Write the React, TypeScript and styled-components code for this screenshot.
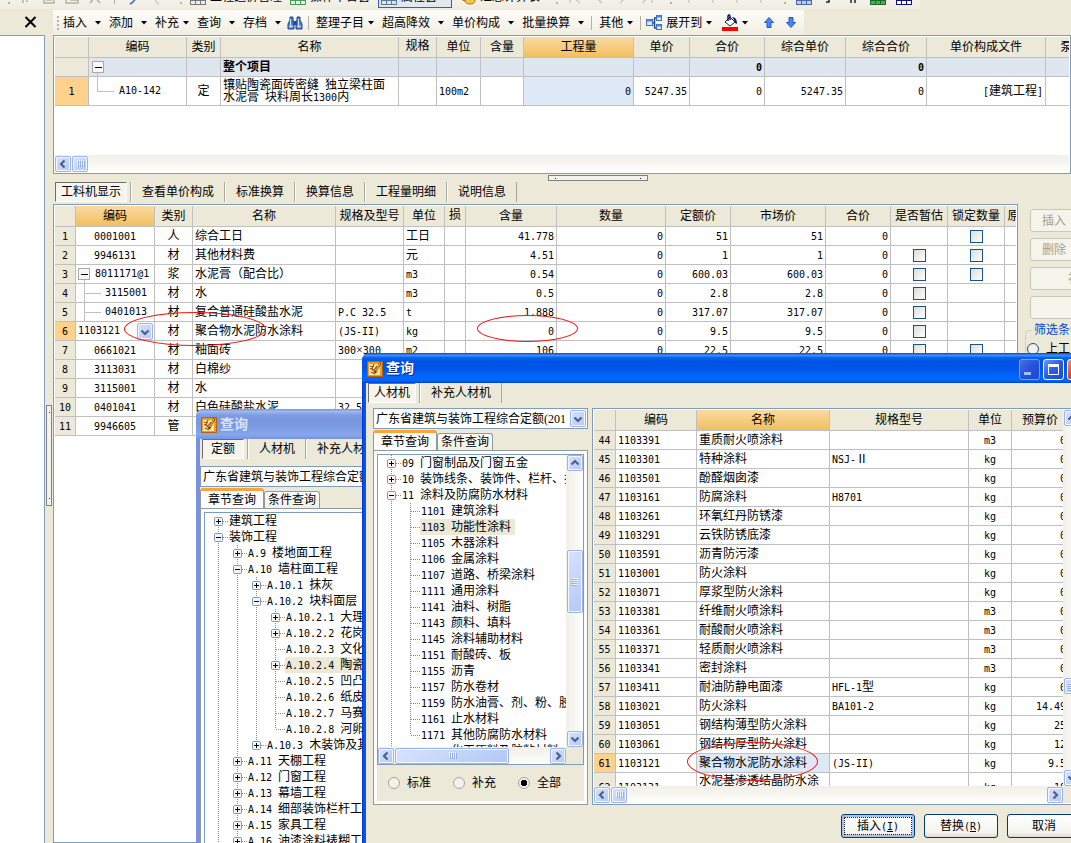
import React from 'react';
import styled, { createGlobalStyle, css } from 'styled-components';

const GlobalStyle = createGlobalStyle`
  *, *::before, *::after { box-sizing: border-box; }
  html, body { margin: 0; padding: 0; }
  body, button, input, select, table {
    font-family: "Liberation Serif", "Noto Sans CJK SC", sans-serif;
    font-size: 12px;
    line-height: 14px;
    color: #000;
  }
  svg { flex: none; }
`;

const face = '#ece9d8';
const edge = '#7f9db9';
const rule = '#c0c0c0';

/* ---------- text ---------- */

const Latin = styled.span`
  font-family: "DejaVu Sans Mono", monospace;
  font-size: 10px;
  line-height: 1;
  white-space: pre;
`;

/* Half-width characters are set in a monospaced face, half as wide as a Chinese character. */
function Mix({ text }: { text: string }) {
  return (
    <>
      {text.split(/([\x20-\x7e]+)/).map((part, i) =>
        i % 2 ? <Latin key={i}>{part}</Latin> : part
      )}
    </>
  );
}

/* ---------- page frame ---------- */

const Page = styled.div`
  position: relative;
  display: flex;
  flex-direction: column;
  height: 100vh;
  overflow: hidden;
  background: ${face};
`;

const TopStrip = styled.div`
  display: flex;
  align-items: flex-end;
  height: 9px;
  overflow: hidden;
`;

const TopGroup = styled.div<{ $gap: number }>`
  display: flex;
  align-items: center;
  gap: ${p => p.$gap}px;
  height: 24px;
  padding: 0 8px;
  white-space: nowrap;
  background: linear-gradient(#fdfcfa, #efece0);
`;

const TopToggle = styled.button`
  display: flex;
  align-items: center;
  gap: 4px;
  height: 22px;
  padding: 0 14px 0 2px;
  border: 1px solid #2a62c9;
  background: #e2e8f2;
`;

const TopLabel = styled.button`
  display: flex;
  align-items: center;
  gap: 4px;
  border: 0;
  padding: 0;
  background: none;
`;

const Body = styled.div`
  display: grid;
  grid-template-columns: 45px 8px minmax(0, 1fr);
  flex: 1;
  min-height: 0;
`;

const LeftDock = styled.aside`
  display: flex;
  flex-direction: column;
`;

const DockHead = styled.div`
  display: flex;
  justify-content: flex-end;
  align-items: center;
  height: 26px;
  padding-right: 8px;
`;

const CloseButton = styled.button`
  display: flex;
  padding: 0;
  border: 0;
  background: none;
`;

const DockPane = styled.div`
  flex: 1;
  background: #fff;
  border-top: 1px solid ${edge};
  border-right: 1px solid ${edge};
`;

const Splitter = styled.div<{ $horizontal?: boolean }>`
  display: flex;
  align-items: ${p => (p.$horizontal ? 'center' : 'flex-start')};
  justify-content: center;
  height: ${p => (p.$horizontal ? '8px' : 'auto')};
  padding-top: ${p => (p.$horizontal ? '0' : '396px')};
  padding-left: ${p => (p.$horizontal ? '72px' : '0')};
`;

const SplitGrip = styled.div<{ $horizontal?: boolean }>`
  display: flex;
  justify-content: space-between;
  align-items: center;
  flex-direction: ${p => (p.$horizontal ? 'row' : 'column')};
  width: ${p => (p.$horizontal ? '100px' : '6px')};
  height: ${p => (p.$horizontal ? '6px' : '101px')};
  padding: ${p => (p.$horizontal ? '0 6px' : '6px 0')};
  border: 1px solid #808080;
  background: #f4f2ea;
  &::before, &::after { content: ''; width: 1px; height: 1px; background: #1c1c7c; }
`;

const MainArea = styled.main`
  display: flex;
  flex-direction: column;
  min-width: 0;
  min-height: 0;
`;

/* ---------- toolbar ---------- */

const Toolbar = styled.div`
  display: flex;
  align-items: center;
  align-self: flex-start;
  height: 25px;
  margin-top: 1px;
  padding: 0 4px;
  border-radius: 2px;
  background: linear-gradient(#fefdfb, #f0ede1);
`;

const Handle = styled.span`
  width: 2px;
  height: 14px;
  flex: none;
  background: repeating-linear-gradient(#b8b4a2 0 2px, transparent 2px 4px);
`;

const ToolButton = styled.button<{ $tight?: boolean; $icon?: boolean }>`
  display: flex;
  align-items: center;
  gap: ${p => (p.$tight ? 4 : 8)}px;
  height: 22px;
  padding: 0 ${p => (p.$icon ? 2 : 4)}px;
  border: 0;
  background: none;
  white-space: nowrap;
`;

const ToolSep = styled.span`
  width: 1px;
  height: 14px;
  margin: 0 3px;
  background: #b5b2a2;
`;

const ToolGap = styled.span`
  width: 4px;
`;

function Caret() {
  return (
    <svg width="6" height="4" viewBox="0 0 6 4">
      <path d="M0 0h6L3 3.6z" fill="#000" />
    </svg>
  );
}

/* ---------- grids ---------- */

const Panel = styled.section<{ $grow?: boolean }>`
  display: flex;
  flex-direction: column;
  flex: ${p => (p.$grow ? '1' : 'none')};
  min-width: 0;
  min-height: 0;
  padding: 1px;
  border: 1px solid ${edge};
  background: #fff;
`;

const GridView = styled.div<{ $height?: number }>`
  ${p => (p.$height ? css`height: ${p.$height}px;` : css`flex: 1;`)}
  min-width: 0;
  overflow: hidden;
  background: #fff;
`;

const Grid = styled.table`
  table-layout: fixed;
  border-collapse: separate;
  border-spacing: 0;
`;

const Th = styled.th<{ $hot?: boolean; $top?: boolean }>`
  height: 21px;
  padding: ${p => (p.$top ? '2px 0 0' : '0')};
  font-weight: normal;
  text-align: center;
  vertical-align: ${p => (p.$top ? 'top' : 'middle')};
  white-space: nowrap;
  overflow: hidden;
  border-right: 1px solid ${rule};
  border-bottom: 1px solid ${rule};
  background: ${p => (p.$hot ? 'linear-gradient(#fbdaa2, #f1bf60)' : face)};
`;

type Align = 'left' | 'right' | 'center';

const Td = styled.td<{ $align?: Align; $bg?: string; $bold?: boolean; $h?: number; $wrap?: boolean }>`
  height: ${p => p.$h ?? 19}px;
  padding: 0 2px;
  text-align: ${p => p.$align ?? 'left'};
  font-weight: ${p => (p.$bold ? 'bold' : 'normal')};
  white-space: ${p => (p.$wrap ? 'normal' : 'nowrap')};
  line-height: ${p => (p.$wrap ? 12 : 14)}px;
  overflow: hidden;
  border-right: 1px solid ${rule};
  border-bottom: 1px solid ${rule};
  background: ${p => p.$bg ?? 'transparent'};
`;

const RowHead = styled.th<{ $on?: boolean }>`
  padding: 0;
  font-weight: normal;
  text-align: center;
  border-right: 1px solid ${rule};
  border-bottom: 1px solid ${rule};
  background: ${p => (p.$on ? '#ffd18a' : face)};
`;

const CodeBox = styled.div`
  display: flex;
  align-items: center;
`;

const Tick = styled.input`
  appearance: none;
  display: block;
  width: 13px;
  height: 13px;
  margin: 0 auto;
  border: 1px solid #1c5180;
  background: linear-gradient(135deg, #dcdcd7, #fff);
`;

/* ---------- scroll bars ---------- */

const HTrack = styled.div<{ $grow?: boolean }>`
  display: flex;
  align-items: center;
  justify-content: space-between;
  flex: ${p => (p.$grow ? '1' : 'none')};
  height: 17px;
  background: linear-gradient(#f0efe8, #fefefc);
`;

const VTrack = styled.div`
  display: flex;
  flex-direction: column;
  align-items: center;
  justify-content: space-between;
  flex: none;
  width: 17px;
  background: linear-gradient(90deg, #f0efe8, #fefefc);
`;

const ScrollSpacer = styled.span<{ $share: number }>`
  flex: ${p => p.$share};
`;

const ScrollEnd = styled.div`
  display: flex;
  flex: 1;
  gap: 1px;
`;

const scrollFace = css`
  display: flex;
  align-items: center;
  justify-content: center;
  flex: none;
  padding: 0;
  border: 1px solid #9db4e6;
  border-radius: 2px;
  box-shadow: inset 0 0 0 1px #f3f7ff;
  background: linear-gradient(135deg, #d6e2fe, #b4c8f6);
`;

const Arrow = styled.button`
  ${scrollFace}
  width: 16px;
  height: 16px;
`;

const Thumb = styled.div<{ $w?: number; $h?: number }>`
  ${scrollFace}
  width: ${p => p.$w ?? 16}px;
  height: ${p => p.$h ?? 16}px;
`;

type Dir = 'left' | 'right' | 'up' | 'down';
const chevrons: Record<Dir, string> = {
  left: 'M6.5 1.5L3 5l3.5 3.5',
  right: 'M3.5 1.5L7 5L3.5 8.5',
  up: 'M1.5 6.5L5 3l3.5 3.5',
  down: 'M1.5 3.5L5 7l3.5-3.5',
};

function Chevron({ dir }: { dir: Dir }) {
  return (
    <svg width="10" height="10" viewBox="0 0 10 10">
      <path d={chevrons[dir]} fill="none" stroke="#4d6185" strokeWidth="2.2" />
    </svg>
  );
}

function Ribs({ vertical }: { vertical?: boolean }) {
  return (
    <svg width="9" height="9" viewBox="0 0 9 9">
      <g transform={vertical ? 'rotate(90 4.5 4.5)' : undefined}>
        <path d="M1.5 1v6M3.5 1v6M5.5 1v6M7.5 1v6" stroke="#f0f5ff" />
        <path d="M2.5 2v6M4.5 2v6M6.5 2v6M8.5 2v6" stroke="#93ade8" />
      </g>
    </svg>
  );
}

/* ---------- flat tabs ---------- */

const Tabs = styled.div`
  display: flex;
  flex: none;
  height: 20px;
  padding-left: 1px;
`;

const TabSlot = styled.div<{ $on?: boolean }>`
  display: flex;
  padding: ${p => (p.$on ? '0 3px 0 0' : '0')};
  border-left: 1px solid #fff;
  border-right: 1px solid #aca899;
  &:first-child { border-left-color: ${face}; }
`;

const Tab = styled.button<{ $on?: boolean }>`
  min-width: 42px;
  padding: 0 ${p => (p.$on ? 5 : 10)}px;
  white-space: nowrap;
  border: 0 solid transparent;
  background: none;
  ${p => p.$on && css`
    border-width: 1px;
    border-color: #716f64 #fff #fff #716f64;
    background: #f6f4ec;
  `}
`;

function TabStrip({ items }: { items: string[] }) {
  return (
    <Tabs role="tablist">
      {items.map((t, i) => (
        <TabSlot key={t} $on={i === 0}>
          <Tab role="tab" aria-selected={i === 0} $on={i === 0}>{t}</Tab>
        </TabSlot>
      ))}
    </Tabs>
  );
}

/* ---------- lower half ---------- */

const LowerRow = styled.div`
  display: flex;
  flex: 1;
  min-height: 0;
  margin-top: 2px;
`;

const SideTools = styled.div`
  display: flex;
  flex-direction: column;
  flex: none;
  gap: 6px;
  width: 53px;
  padding: 5px 0 0 12px;
`;

const GreyButton = styled.button<{ $wide?: boolean }>`
  width: ${p => (p.$wide ? 100 : 48)}px;
  height: 23px;
  flex: none;
  padding: 0;
  border: 1px solid #c9c7ba;
  border-radius: 3px;
  background: #f5f4ea;
  color: #a1a192;
`;

const FilterBox = styled.fieldset`
  width: 120px;
  height: 100px;
  margin: -2px 0 0 -5px;
  padding: 5px 0 0 1px;
  border: 1px solid #d0d0bf;
  border-radius: 4px;
  white-space: nowrap;
`;

const FilterLegend = styled.legend`
  margin-left: 5px;
  padding: 0 2px;
  color: #0046d5;
`;

const RadioLabel = styled.label`
  display: flex;
  align-items: center;
  gap: 7px;
`;

const Radio = styled.input<{ $muted?: boolean }>`
  appearance: none;
  width: 12px;
  height: 12px;
  margin: 0;
  border: 1px solid ${p => (p.$muted ? '#a8a598' : '#1c5180')};
  border-radius: 50%;
  background: #f4f2e8;
  &:checked { background: radial-gradient(circle, #000 0 3px, #f4f2e8 3px); }
`;

const Ring = styled.div<{ $x: number; $y: number; $w: number; $h: number }>`
  position: absolute;
  left: ${p => p.$x}px;
  top: ${p => p.$y}px;
  width: ${p => p.$w}px;
  height: ${p => p.$h}px;
  border: 1px solid #f01818;
  border-radius: 50%;
  pointer-events: none;
`;

/* ---------- windows ---------- */

const Win = styled.section<{ $active?: boolean }>`
  position: absolute;
  left: ${p => (p.$active ? 362 : 196)}px;
  top: ${p => (p.$active ? 353 : 409)}px;
  ${p => (p.$active ? css`right: -22px;` : css`width: 480px;`)}
  padding: 0 4px 4px;
  border-radius: 7px 7px 0 0;
  background: ${p => (p.$active ? 'linear-gradient(90deg, #0031d8, #0855e8 2px, #0855e8)' : '#7a90e0')};
`;

const TitleBar = styled.header<{ $active?: boolean }>`
  display: flex;
  align-items: center;
  gap: 3px;
  height: 30px;
  margin: 0 -4px;
  padding: 2px 5px 0;
  border-radius: 7px 7px 0 0;
  background: ${p =>
    p.$active
      ? 'linear-gradient(#0a48c8, #3a92ff 8%, #0560ec 16%, #0053e4 30%, #0057ea 55%, #0068ff 82%, #0064fa 92%, #0042cc)'
      : 'linear-gradient(#7691e0, #a0b8ee 8%, #809ce4 20%, #7a96df 35%, #7d9ae2 60%, #84a8ea 85%, #7a94de)'};
`;

const TitleText = styled.h1<{ $active?: boolean }>`
  flex: 1;
  margin: 0;
  font-size: 14px;
  line-height: 18px;
  font-weight: bold;
  color: ${p => (p.$active ? '#fff' : '#d8e4f8')};
  text-shadow: ${p => (p.$active ? '1px 1px #0a2c8c' : 'none')};
`;

const CaptionButton = styled.button<{ $kind: 'min' | 'max' | 'close' }>`
  display: flex;
  align-items: center;
  justify-content: center;
  width: 21px;
  height: 21px;
  padding: 0;
  border: 1px solid ${p => (p.$kind === 'min' ? '#7e9ef0' : '#fff')};
  border-radius: 3px;
  background: ${p =>
    p.$kind === 'close'
      ? 'linear-gradient(135deg, #f0957c, #d8401c 50%, #b83010)'
      : p.$kind === 'max'
        ? 'linear-gradient(135deg, #6a96f6, #2a5ce4 50%, #1c4ad8)'
        : 'linear-gradient(135deg, #4a70e0, #2352dc 50%, #1a48d4)'};
`;

const WinBody = styled.div`
  background: ${face};
`;

const Combo = styled.div`
  position: relative;
  height: 21px;
  border: 1px solid ${edge};
  background: #fff;
`;

const ComboSelect = styled.select`
  appearance: none;
  display: block;
  width: 100%;
  height: 19px;
  padding: 0 22px 0 2px;
  border: 0;
  background: none;
`;

const ComboArrow = styled.span`
  ${scrollFace}
  position: absolute;
  top: 1px;
  right: 1px;
  width: 16px;
  height: 17px;
  pointer-events: none;
`;

const FormTabs = styled.div`
  display: flex;
  align-items: flex-end;
  height: 20px;
  margin-top: 1px;
`;

const FormTab = styled.button<{ $on?: boolean }>`
  height: ${p => (p.$on ? 20 : 17)}px;
  width: ${p => (p.$on ? 64 : 56)}px;
  padding: 0;
  border: 1px solid #919b9c;
  border-bottom: 0;
  border-radius: 3px 3px 0 0;
  background: linear-gradient(#fff, #f0f0ea);
  ${p => p.$on && css`
    border-top: 3px solid #f9a53a;
    background: #fcfcfe;
  `}
`;

const TabPane = styled.div`
  padding: 3px;
  border: 1px solid #919b9c;
  background: ${face};
  box-shadow: inset 0 0 0 3px #fcfcfe;
`;

const TreeBox = styled.div`
  border: 1px solid ${edge};
  background: #fff;
`;

const TreeRow = styled.div`
  display: flex;
  height: 16px;
  white-space: nowrap;
`;

const TreeView = styled.div<{ $height: number }>`
  flex: 1;
  min-width: 0;
  height: ${p => p.$height}px;
  padding-left: 4px;
  overflow: hidden;
`;

const TreeSplit = styled.div`
  display: flex;
`;

const TreeLabel = styled.button<{ $on?: boolean }>`
  height: 16px;
  padding: 0 4px 0 1px;
  border: 0;
  white-space: nowrap;
  background: ${p => (p.$on ? face : 'none')};
`;

/* | line, t tee, L corner, + and - boxes, p last closed box, s first closed box, space nothing */
function Guide({ kind }: { kind: string }) {
  const up = '|tL+-p'.includes(kind);
  const down = '|t+-s'.includes(kind);
  const branch = 'tL+-ps'.includes(kind);
  const box = '+-ps'.includes(kind);
  return (
    <svg width="19" height="16" viewBox="0 0 19 16">
      <g stroke="#8a8a8a" strokeDasharray="1 1">
        {up && <path d="M9.5 0v8" />}
        {down && <path d="M9.5 8v8" />}
        {branch && <path d="M10 8.5h9" />}
      </g>
      {box && (
        <>
          <rect x="5.5" y="4.5" width="8" height="8" rx="1" fill="#f6f4ee" stroke="#7898b5" />
          <path d={kind === '-' ? 'M7 8.5h5' : 'M7 8.5h5M9.5 6v5'} stroke="#000" />
        </>
      )}
    </svg>
  );
}

type Node = [string, string, boolean?];

function Tree({ nodes, height }: { nodes: Node[]; height: number }) {
  return (
    <TreeView $height={height} role="tree">
      {nodes.map(([guides, label, on]) => (
        <TreeRow key={label} role="treeitem" aria-selected={!!on}>
          {guides.split('').map((g, i) => <Guide key={i} kind={g} />)}
          <TreeLabel $on={on}><Mix text={label} /></TreeLabel>
        </TreeRow>
      ))}
    </TreeView>
  );
}

const QuotaBody = styled.div`
  padding: 7px 4px 0 0;
`;

const QueryBody = styled.div`
  display: grid;
  grid-template-columns: 215px minmax(0, 1fr);
  gap: 4px;
  padding: 5px 8px 0 7px;
`;

const RadioRow = styled.div`
  display: flex;
  gap: 22px;
  align-items: center;
  height: 36px;
  padding-left: 11px;
`;

const Corner = styled.div`
  width: 17px;
  height: 17px;
  flex: none;
  background: ${face};
`;

const ResultRow = styled.div`
  display: flex;
  min-width: 0;
`;

const ResultPane = styled.div`
  border: 1px solid ${edge};
  padding: 1px 0 1px 1px;
  background: #fff;
`;

const Footer = styled.footer`
  display: flex;
  justify-content: flex-end;
  gap: 9px;
  padding: 9px 8px 14px;
`;

const XpButton = styled.button<{ $default?: boolean }>`
  width: 74px;
  height: 24px;
  padding: 0;
  border: 1px solid #003c74;
  border-radius: 3px;
  background: linear-gradient(#fff, #f3f3ef 80%, #dcd8cf);
  ${p => p.$default && css`
    box-shadow: inset 0 0 0 2px #a9c3f0;
    outline: 1px dotted #222;
    outline-offset: -4px;
  `}
`;

/* ---------- icons ---------- */

const Binoculars = () => (
  <svg width="16" height="16" viewBox="0 0 16 16">
    <path d="M3 2h3v3l1 2v7H1V9l2-4z" fill="#4a7cc8" stroke="#24488e" />
    <path d="M10 2h3v3l2 4v5H9V7l1-2z" fill="#4a7cc8" stroke="#24488e" />
    <path d="M6.500 6h3v4h-3z" fill="#24488e" />
    <path d="M3.500 4v7M11.500 4v7" stroke="#cfe2fa" />
    <path d="M2 11.500h4M10 11.500h4" stroke="#b4d0f4" strokeWidth="2" />
  </svg>
);

const ExpandIcon = () => (
  <svg width="16" height="16" viewBox="0 0 16 16">
    <path d="M6 8h3M8.500 3v10M8 3h3M8 13h3" fill="none" stroke="#234a8c" strokeWidth="1.500" />
    <g fill="#d9e8fc" stroke="#3a70c8">
      <rect x=".5" y="4.500" width="6" height="6" />
      <rect x="10.500" y=".5" width="5" height="5" />
      <rect x="10.500" y="9.500" width="5" height="5" />
    </g>
    <path d="M1 5.500h5M11 1.500h4M11 10.500h4" stroke="#4a86e0" strokeWidth="2" />
  </svg>
);

const BucketIcon = () => (
  <svg width="16" height="17" viewBox="0 0 16 17">
    <path d="M3 8l5-5 5 5-5 4z" fill="#fff" stroke="#222" />
    <path d="M6 7V2q1-2 2 0v4" fill="none" stroke="#10107c" strokeWidth="1.500" />
    <path d="M10 3q5 0 5 7l-2-1q0-3-3-6z" fill="#10107c" />
    <path d="M0 13h16v4H0z" fill="#f00" />
  </svg>
);

const BlueArrow = ({ down }: { down?: boolean }) => (
  <svg width="10" height="11" viewBox="0 0 10 11">
    <path
      d="M5 .5L9.500 5.500H7v5H3v-5H.5z"
      transform={down ? 'rotate(180 5 5.500)' : undefined}
      fill="#4a86f0"
      stroke="#2458c0"
    />
  </svg>
);

const AppIcon = () => (
  <svg width="16" height="16" viewBox="0 0 16 16">
    <rect x=".5" y=".5" width="15" height="15" fill="#f29a1a" stroke="#b8600c" />
    <path d="M2 3h9l2 2v9H2z" fill="#ffe9a8" />
    <path d="M3 5l3 1M3 8l3-1M7 3l-2 5 3 3M10 5L7 9M4 11l4 2" fill="none" stroke="#a04a08" strokeWidth="1.200" />
    <path d="M13.500 1.500L8 12" stroke="#7a2c04" strokeWidth="2" />
    <path d="M13 2L9 10" stroke="#ffd24a" />
  </svg>
);

const DimIcon = ({ d, color = '#b4b0a4' }: { d: string; color?: string }) => (
  <svg width="14" height="16" viewBox="0 0 14 16">
    <path d={d} fill="none" stroke={color} strokeWidth="1.500" />
  </svg>
);

const SheetIcon = ({ fill, stroke }: { fill: string; stroke: string }) => (
  <svg width="16" height="16" viewBox="0 0 16 16">
    <rect x=".5" y=".5" width="15" height="15" fill={fill} stroke={stroke} />
    <path d="M1 11.500h14M5.500 8v7M10.500 8v7" stroke={stroke} />
  </svg>
);

const CoinIcon = () => (
  <svg width="16" height="16" viewBox="0 0 16 16">
    <ellipse cx="6" cy="9" rx="5" ry="3" fill="#f4c64a" stroke="#b07a14" />
    <ellipse cx="10" cy="12" rx="5" ry="3" fill="#f4c64a" stroke="#b07a14" />
  </svg>
);

/* ---------- upper grid ---------- */

const topCols: [string, number][] = [
  ['', 34], ['编码', 98], ['类别', 34], ['名称', 178], ['规格', 38], ['单位', 44], ['含量', 43],
  ['工程量', 110], ['单价', 56], ['合价', 75], ['综合单价', 81], ['综合合价', 81],
  ['单价构成文件', 119], ['泵送类别', 78],
];

const Cols = ({ widths }: { widths: number[] }) => (
  <colgroup>
    {widths.map((w, i) => <col key={i} width={w} />)}
  </colgroup>
);

const sum = (list: number[]) => list.reduce((a, b) => a + b, 0);

function ProjectGrid() {
  const widths = topCols.map(c => c[1]);
  const blue = '#dee6f0';
  return (
    <GridView $height={118}>
      <Grid width={sum(widths)}>
        <Cols widths={widths} />
        <thead>
          <tr>
            {topCols.map(([t], i) => (
              <Th key={i} $hot={t === '工程量'} $top={t === '规格'}>{t}</Th>
            ))}
          </tr>
        </thead>
        <tbody>
          <tr>
            <RowHead />
            <Td $bg={blue}>
              <CodeBox>
                <svg width="16" height="18" viewBox="0 0 16 18">
                  <rect x="1.500" y="3.500" width="11" height="11" fill="#f8f8f5" stroke="#aaa" />
                  <path d="M4 9.500h7" stroke="#000" />
                  <path d="M6.500 15v3" stroke={rule} />
                </svg>
              </CodeBox>
            </Td>
            <Td $bg={blue} />
            <Td $bg={blue} $bold>整个项目</Td>
            {['', '', '', '', '', '0', '', '0', '', ''].map((v, i) => (
              <Td key={i} $bg={blue} $bold $align="right"><Mix text={v} /></Td>
            ))}
          </tr>
          <tr>
            <RowHead $on scope="row"><Latin>1</Latin></RowHead>
            <Td $h={29}>
              <CodeBox>
                <svg width="28" height="28" viewBox="0 0 28 28">
                  <path d="M6.500 0v14.500H23" fill="none" stroke={rule} />
                </svg>
                <Latin>A10-142</Latin>
              </CodeBox>
            </Td>
            <Td $align="center">定</Td>
            <Td $wrap><Mix text="镶贴陶瓷面砖密缝 独立梁柱面" /><br /><Mix text="水泥膏 块料周长1300内" /></Td>
            <Td />
            <Td><Latin>100m2</Latin></Td>
            <Td />
            <Td $align="right" $bg="#dfe8f6"><Latin>0</Latin></Td>
            <Td $align="right"><Latin>5247.35</Latin></Td>
            <Td $align="right"><Latin>0</Latin></Td>
            <Td $align="right"><Latin>5247.35</Latin></Td>
            <Td $align="right"><Latin>0</Latin></Td>
            <Td $align="right"><Mix text="[建筑工程]" /></Td>
            <Td />
          </tr>
        </tbody>
      </Grid>
    </GridView>
  );
}

/* ---------- resource grid ---------- */

const resCols: [string, number][] = [
  ['', 21], ['编码', 79], ['类别', 38], ['名称', 143], ['规格及型号', 68], ['单位', 41], ['损', 21],
  ['含量', 91], ['数量', 109], ['定额价', 65], ['市场价', 95], ['合价', 65], ['是否暂估', 57],
  ['锁定数量', 57], ['原', 18],
];

/* code, kind, name, spec, unit, content, price, estimate box, lock box */
type Res = [string, string, string, string, string, string, string, boolean, boolean];
const resources: Res[] = [
  ['0001001', '人', '综合工日', '', '工日', '41.778', '51', false, true],
  ['9946131', '材', '其他材料费', '', '元', '4.51', '1', true, true],
  ['8011171@1', '浆', '水泥膏（配合比）', '', 'm3', '0.54', '600.03', true, true],
  ['3115001', '材', '水', '', 'm3', '0.5', '2.8', true, false],
  ['0401013', '材', '复合普通硅酸盐水泥', 'P.C 32.5', 't', '1.888', '317.07', true, false],
  ['1103121', '材', '聚合物水泥防水涂料', '(JS-II)', 'kg', '0', '9.5', true, false],
  ['0661021', '材', '釉面砖', '300×300', 'm2', '106', '22.5', true, true],
  ['3113031', '材', '白棉纱', '', '', '', '', true, true],
  ['3115001', '材', '水', '', '', '', '', true, true],
  ['0401041', '材', '白色硅酸盐水泥', '32.5', '', '', '', true, true],
  ['9946605', '管', '', '', '', '', '', true, true],
];

const CellCombo = styled.div`
  position: relative;
  margin: 0 -2px;
`;

const CellSelect = styled.select`
  appearance: none;
  display: block;
  width: 100%;
  height: 18px;
  padding: 0 20px 0 2px;
  border: 0;
  background: #fff;
  font-family: "DejaVu Sans Mono", monospace;
  font-size: 10px;
`;

function CodeCell({ row, code }: { row: number; code: string }) {
  if (row === 2) {
    return (
      <CodeBox>
        <svg width="17" height="18" viewBox="0 0 17 18">
          <rect x=".5" y="3.500" width="11" height="11" fill="#f8f8f5" stroke="#aaa" />
          <path d="M3 9.500h7" stroke="#000" />
          <path d="M6.500 15v3" stroke={rule} />
        </svg>
        <Latin>{code}</Latin>
      </CodeBox>
    );
  }
  if (row === 3 || row === 4) {
    return (
      <CodeBox>
        <svg width="27" height="18" viewBox="0 0 27 18">
          <path d="M6.500 0v18M7 9.500h16" stroke={rule} />
        </svg>
        <Latin>{code}</Latin>
      </CodeBox>
    );
  }
  if (row === 5) {
    return (
      <CellCombo>
        <CellSelect aria-label="编码" defaultValue={code}>
          <option>{code}</option>
        </CellSelect>
        <ComboArrow><Chevron dir="down" /></ComboArrow>
      </CellCombo>
    );
  }
  return <Latin>{code}</Latin>;
}

function ResourceGrid() {
  const widths = resCols.map(c => c[1]);
  return (
    <GridView>
      <Grid width={sum(widths)}>
        <Cols widths={widths} />
        <thead>
          <tr>
            {resCols.map(([t], i) => (
              <Th key={i} $hot={t === '编码'} $top={t === '损'}>{t}</Th>
            ))}
          </tr>
        </thead>
        <tbody>
          {resources.map(([code, kind, name, spec, unit, content, price, est, lock], i) => (
            <tr key={i}>
              <RowHead $on={i === 5} scope="row"><Latin>{i + 1}</Latin></RowHead>
              <Td $align="center"><CodeCell row={i} code={code} /></Td>
              <Td $align="center">{kind}</Td>
              <Td>{name}</Td>
              <Td><Mix text={spec} /></Td>
              <Td><Mix text={unit} /></Td>
              <Td />
              <Td $align="right"><Mix text={content} /></Td>
              <Td $align="right"><Mix text={price && '0'} /></Td>
              <Td $align="right"><Mix text={price} /></Td>
              <Td $align="right"><Mix text={price} /></Td>
              <Td $align="right"><Mix text={price && '0'} /></Td>
              <Td>{est && <Tick type="checkbox" aria-label="是否暂估" />}</Td>
              <Td>{lock && <Tick type="checkbox" aria-label="锁定数量" />}</Td>
              <Td />
            </tr>
          ))}
        </tbody>
      </Grid>
    </GridView>
  );
}

/* ---------- result grid ---------- */

const resultCols: [string, number][] = [
  ['', 22], ['编码', 81], ['名称', 133], ['规格型号', 139], ['单位', 43], ['预算价', 57],
];

const results: [string, string, string, string, string][] = [
  ['1103391', '重质耐火喷涂料', '', 'm3', '0'],
  ['1103301', '特种涂料', 'NSJ-Ⅱ', 'kg', '0'],
  ['1103501', '酚醛烟囱漆', '', 'kg', '0'],
  ['1103161', '防腐涂料', 'H8701', 'kg', '0'],
  ['1103261', '环氧红丹防锈漆', '', 'kg', '0'],
  ['1103291', '云铁防锈底漆', '', 'kg', '0'],
  ['1103591', '沥青防污漆', '', 'kg', '0'],
  ['1103001', '防火涂料', '', 'kg', '0'],
  ['1103071', '厚浆型防火涂料', '', 'kg', '0'],
  ['1103381', '纤维耐火喷涂料', '', 'm3', '0'],
  ['1103361', '耐酸耐火喷涂料', '', 'm3', '0'],
  ['1103371', '轻质耐火喷涂料', '', 'm3', '0'],
  ['1103341', '密封涂料', '', 'm3', '0'],
  ['1103411', '耐油防静电面漆', 'HFL-1型', 'kg', '0'],
  ['1103021', '防火涂料', 'BA101-2', 'kg', '14.49'],
  ['1103051', '钢结构薄型防火涂料', '', 'kg', '25'],
  ['1103061', '钢结构厚型防火涂料', '', 'kg', '12'],
  ['1103121', '聚合物水泥防水涂料', '(JS-II)', 'kg', '9.5'],
  ['1103131', '水泥基渗透结晶防水涂料', '', 'kg', '18'],
];

function ResultGrid() {
  const widths = resultCols.map(c => c[1]);
  return (
    <GridView $height={376}>
      <Grid width={sum(widths)}>
        <Cols widths={widths} />
        <thead>
          <tr>
            {resultCols.map(([t], i) => <Th key={i} $hot={t === '名称'}>{t}</Th>)}
          </tr>
        </thead>
        <tbody>
          {results.map(([code, name, spec, unit, price], i) => {
            const last = i === results.length - 1;
            return (
              <tr key={code}>
                <RowHead $on={i === 17} scope="row"><Latin>{i + 44}</Latin></RowHead>
                <Td $h={last ? 28 : 19}><Latin>{code}</Latin></Td>
                <Td $wrap={last} $bg={i === 17 ? '#dfe8f6' : undefined}>{name}</Td>
                <Td><Mix text={spec} /></Td>
                <Td $align="center"><Latin>{unit}</Latin></Td>
                <Td $align="right"><Latin>{price}</Latin></Td>
              </tr>
            );
          })}
        </tbody>
      </Grid>
    </GridView>
  );
}

/* ---------- tree data ---------- */

const quotaTree: Node[] = [
  ['s', '建筑工程'],
  ['-', '装饰工程'],
  ['|+', 'A.9 楼地面工程'],
  ['|-', 'A.10 墙柱面工程'],
  ['||+', 'A.10.1 抹灰'],
  ['||-', 'A.10.2 块料面层'],
  ['|||+', 'A.10.2.1 大理石'],
  ['|||+', 'A.10.2.2 花岗岩'],
  ['|||t', 'A.10.2.3 文化石'],
  ['|||+', 'A.10.2.4 陶瓷面砖', true],
  ['|||t', 'A.10.2.5 凹凸砖'],
  ['|||t', 'A.10.2.6 纸皮砖'],
  ['|||t', 'A.10.2.7 马赛克'],
  ['|||L', 'A.10.2.8 河卵石'],
  ['||p', 'A.10.3 木装饰及其他'],
  ['|+', 'A.11 天棚工程'],
  ['|+', 'A.12 门窗工程'],
  ['|+', 'A.13 幕墙工程'],
  ['|+', 'A.14 细部装饰栏杆工程'],
  ['|+', 'A.15 家具工程'],
  ['|+', 'A.16 油漆涂料裱糊工程'],
];

const materialTree: Node[] = [
  ['+', '09 门窗制品及门窗五金'],
  ['+', '10 装饰线条、装饰件、栏杆、扶手'],
  ['-', '11 涂料及防腐防水材料'],
  ['|t', '1101 建筑涂料'],
  ['|t', '1103 功能性涂料', true],
  ['|t', '1105 木器涂料'],
  ['|t', '1106 金属涂料'],
  ['|t', '1107 道路、桥梁涂料'],
  ['|t', '1111 通用涂料'],
  ['|t', '1141 油料、树脂'],
  ['|t', '1143 颜料、填料'],
  ['|t', '1145 涂料辅助材料'],
  ['|t', '1151 耐酸砖、板'],
  ['|t', '1155 沥青'],
  ['|t', '1157 防水卷材'],
  ['|t', '1159 防水油膏、剂、粉、胶'],
  ['|t', '1161 止水材料'],
  ['|L', '1171 其他防腐防水材料'],
  ['| ', '1181 化工原料及胶粘材料'],
];

/* ---------- windows ---------- */

function BookCombo() {
  return (
    <Combo>
      <ComboSelect aria-label="定额库">
        <option>广东省建筑与装饰工程综合定额(2010)</option>
      </ComboSelect>
      <ComboArrow><Chevron dir="down" /></ComboArrow>
    </Combo>
  );
}

function QueryTabs() {
  return (
    <FormTabs role="tablist">
      <FormTab role="tab" aria-selected $on>章节查询</FormTab>
      <FormTab role="tab" aria-selected={false}>条件查询</FormTab>
    </FormTabs>
  );
}

function BottomScroll({ thumb }: { thumb?: number }) {
  return (
    <>
      <HTrack $grow>
        <ScrollEnd>
          <Arrow aria-label="向左"><Chevron dir="left" /></Arrow>
          <Thumb $w={thumb}><Ribs /></Thumb>
        </ScrollEnd>
        <Arrow aria-label="向右"><Chevron dir="right" /></Arrow>
      </HTrack>
      <Corner />
    </>
  );
}

function SideScroll({ thumb, before, after }: { thumb?: number; before: number; after: number }) {
  return (
    <VTrack>
      <Arrow aria-label="向上"><Chevron dir="up" /></Arrow>
      <ScrollSpacer $share={before} />
      <Thumb $h={thumb}><Ribs vertical /></Thumb>
      <ScrollSpacer $share={after} />
      <Arrow aria-label="向下"><Chevron dir="down" /></Arrow>
    </VTrack>
  );
}

function QuotaWindow() {
  return (
    <Win aria-label="查询定额">
      <TitleBar>
        <AppIcon />
        <TitleText>查询</TitleText>
      </TitleBar>
      <WinBody>
        <TabStrip items={['定额', '人材机', '补充人材机']} />
        <QuotaBody>
          <BookCombo />
          <QueryTabs />
          <TabPane>
            <TreeBox><Tree nodes={quotaTree} height={350} /></TreeBox>
          </TabPane>
        </QuotaBody>
      </WinBody>
    </Win>
  );
}

function MaterialWindow() {
  return (
    <Win $active aria-label="查询人材机">
      <TitleBar $active>
        <AppIcon />
        <TitleText $active>查询</TitleText>
        <CaptionButton $kind="min" aria-label="最小化">
          <svg width="13" height="13"><path d="M1 10.500h7" stroke="#a8bcf4" strokeWidth="3" /></svg>
        </CaptionButton>
        <CaptionButton $kind="max" aria-label="最大化">
          <svg width="13" height="13">
            <path d="M1.500 2v9.500h10V2" fill="none" stroke="#fff" />
            <path d="M1 2.500h11" stroke="#fff" strokeWidth="3" />
          </svg>
        </CaptionButton>
        <CaptionButton $kind="close" aria-label="关闭">
          <svg width="13" height="13"><path d="M2 2l9 9M11 2l-9 9" stroke="#fff" strokeWidth="2" /></svg>
        </CaptionButton>
      </TitleBar>
      <WinBody>
        <TabStrip items={['人材机', '补充人材机']} />
        <QueryBody>
          <div>
            <BookCombo />
            <QueryTabs />
            <TabPane>
              <TreeBox>
                <TreeSplit>
                  <Tree nodes={materialTree} height={292} />
                  <SideScroll thumb={63} before={4} after={6} />
                </TreeSplit>
                <TreeSplit><BottomScroll thumb={114} /></TreeSplit>
              </TreeBox>
              <RadioRow>
                {['标准', '补充', '全部'].map(t => (
                  <RadioLabel key={t}>
                    <Radio $muted type="radio" name="source" defaultChecked={t === '全部'} />
                    {t}
                  </RadioLabel>
                ))}
              </RadioRow>
            </TabPane>
          </div>
          <ResultPane>
            <ResultRow>
              <ResultGrid />
              <SideScroll before={10} after={3} />
            </ResultRow>
            <ResultRow><BottomScroll /></ResultRow>
          </ResultPane>
        </QueryBody>
        <Footer>
          <XpButton $default><Mix text="插入(" /><Latin as="u">I</Latin><Latin>)</Latin></XpButton>
          <XpButton><Mix text="替换(" /><Latin as="u">R</Latin><Latin>)</Latin></XpButton>
          <XpButton>取消</XpButton>
        </Footer>
      </WinBody>
    </Win>
  );
}

/* ---------- page ---------- */

function Menu({ label, tight }: { label: string; tight?: boolean }) {
  return <ToolButton $tight={tight}>{label}<Caret /></ToolButton>;
}

export default function App() {
  return (
    <Page>
      <GlobalStyle />
      <TopStrip>
        <TopGroup $gap={9}>
          <Handle />
          <DimIcon d="M4 2v12M8 8v5M3 10h8" />
          <DimIcon d="M2 2h10v12H2zM4 11h6" />
          <DimIcon d="M1 3h12v11H1zM5 11h8" />
          <DimIcon d="M2 14L12 2M2 2l10 12" />
          <ToolSep />
          <DimIcon d="M3 15q6-3 7-10" color="#3a6ad8" />
          <DimIcon d="M9 15Q4 12 4 5" color="#d0ccc0" />
        </TopGroup>
        <TopGroup $gap={8}>
          <Handle />
          <TopLabel><SheetIcon fill="#eee" stroke="#777" />工程造价管理</TopLabel>
          <TopLabel><SheetIcon fill="#e4f6e0" stroke="#4a9a5a" />操作平台窗</TopLabel>
          <TopToggle><SheetIcon fill="#d4ecd0" stroke="#5a7a9a" />属性窗</TopToggle>
          <TopLabel><CoinIcon />汇总计算表</TopLabel>
        </TopGroup>
        <TopGroup $gap={10}>
          <Handle />
          <DimIcon d="M2 3v11M12 3L5 8l7 6" color="#ccc8bc" />
          <DimIcon d="M10 3L4 8l6 6" color="#ccc8bc" />
          <DimIcon d="M4 3l6 5-6 6" color="#ccc8bc" />
          <DimIcon d="M12 3v11M2 3l7 5-7 6" color="#ccc8bc" />
        </TopGroup>
        <TopGroup $gap={10}>
          <Handle />
          <DimIcon d="M7 3v11" color="#ccc8bc" />
          <DimIcon d="M7 3v11" color="#ccc8bc" />
          <DimIcon d="M7 3v11" color="#ccc8bc" />
          <DimIcon d="M7 3v11" color="#ccc8bc" />
        </TopGroup>
        <TopGroup $gap={10}>
          <Handle />
          <SheetIcon fill="#b8cdf0" stroke="#4a68a8" />
          <DimIcon d="M7 2v11H4" color="#222" />
          <DimIcon d="M5 2v12M9 2v12" color="#222" />
          <SheetIcon fill="#4cae50" stroke="#1c6a28" />
          <SheetIcon fill="#fff" stroke="#10107c" />
        </TopGroup>
      </TopStrip>
      <Body>
        <LeftDock>
          <DockHead>
            <CloseButton aria-label="关闭">
              <svg width="13" height="12" viewBox="0 0 13 12">
                <path d="M1.500 1l10 10M11.500 1l-10 10" stroke="#000" strokeWidth="2" />
              </svg>
            </CloseButton>
          </DockHead>
          <DockPane />
        </LeftDock>
        <Splitter><SplitGrip /></Splitter>
        <MainArea>
          <Toolbar role="toolbar">
            <Handle />
            <Menu label="插入" />
            <Menu label="添加" />
            <Menu label="补充" tight />
            <Menu label="查询" />
            <Menu label="存档" />
            <ToolButton $icon aria-label="查找"><Binoculars /></ToolButton>
            <ToolSep />
            <Menu label="整理子目" tight />
            <Menu label="超高降效" />
            <Menu label="单价构成" />
            <Menu label="批量换算" />
            <ToolSep />
            <Menu label="其他" tight />
            <ToolSep />
            <ToolButton $icon $tight><ExpandIcon />展开到<Caret /></ToolButton>
            <ToolGap />
            <ToolButton $tight aria-label="填充颜色"><BucketIcon /><Caret /></ToolButton>
            <ToolGap /><ToolGap />
            <ToolButton aria-label="上移"><BlueArrow /></ToolButton>
            <ToolGap />
            <ToolButton aria-label="下移"><BlueArrow down /></ToolButton>
          </Toolbar>
          <Panel>
            <ProjectGrid />
            <HTrack>
              <ScrollEnd>
                <Arrow aria-label="向左"><Chevron dir="left" /></Arrow>
                <Thumb><Ribs /></Thumb>
              </ScrollEnd>
            </HTrack>
          </Panel>
          <Splitter $horizontal><SplitGrip $horizontal /></Splitter>
          <TabStrip items={['工料机显示', '查看单价构成', '标准换算', '换算信息', '工程量明细', '说明信息']} />
          <LowerRow>
            <Panel $grow><ResourceGrid /></Panel>
            <SideTools>
              <GreyButton disabled>插入</GreyButton>
              <GreyButton disabled>删除</GreyButton>
              <GreyButton disabled $wide>补充</GreyButton>
              <GreyButton disabled $wide />
              <FilterBox>
                <FilterLegend>筛选条件</FilterLegend>
                <RadioLabel><Radio type="radio" name="filter" />上工</RadioLabel>
              </FilterBox>
            </SideTools>
          </LowerRow>
        </MainArea>
      </Body>
      <Ring $x={124} $y={312} $w={142} $h={34} />
      <Ring $x={477} $y={315} $w={101} $h={27} />
      <QuotaWindow />
      <MaterialWindow />
      <Ring $x={687} $y={742} $w={131} $h={39} />
    </Page>
  );
}
